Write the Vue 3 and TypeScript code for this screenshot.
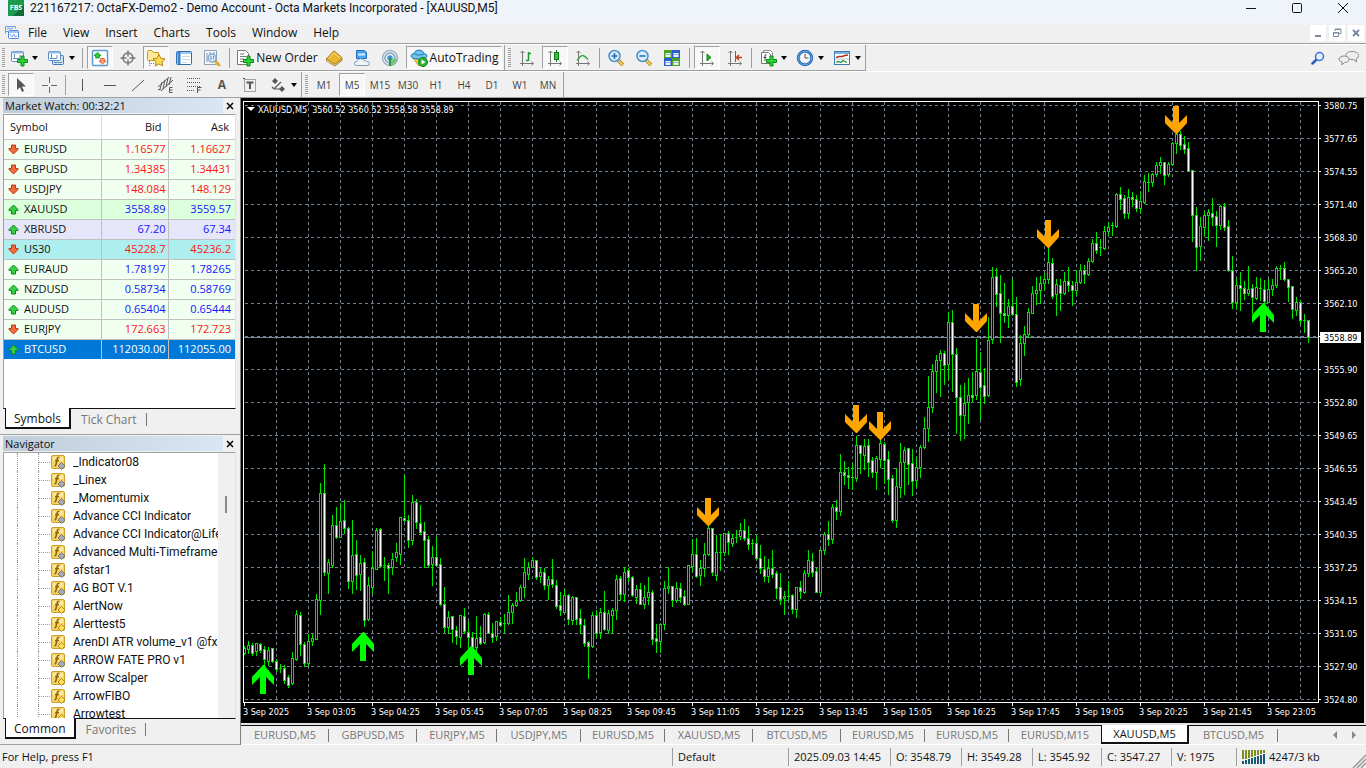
<script setup lang="ts">
import { ref } from 'vue'

interface Quote { symbol: string; bid: string; ask: string; up: boolean; tone: string }

const quotes: Quote[] = [
  { symbol: 'EURUSD', bid: '1.16577', ask: '1.16627', up: false, tone: 'mint' },
  { symbol: 'GBPUSD', bid: '1.34385', ask: '1.34431', up: false, tone: 'mint' },
  { symbol: 'USDJPY', bid: '148.084', ask: '148.129', up: false, tone: 'mint' },
  { symbol: 'XAUUSD', bid: '3558.89', ask: '3559.57', up: true, tone: 'green' },
  { symbol: 'XBRUSD', bid: '67.20', ask: '67.34', up: true, tone: 'lavender' },
  { symbol: 'US30', bid: '45228.7', ask: '45236.2', up: false, tone: 'cyan' },
  { symbol: 'EURAUD', bid: '1.78197', ask: '1.78265', up: true, tone: 'mint' },
  { symbol: 'NZDUSD', bid: '0.58734', ask: '0.58769', up: true, tone: 'mint' },
  { symbol: 'AUDUSD', bid: '0.65404', ask: '0.65444', up: true, tone: 'mint' },
  { symbol: 'EURJPY', bid: '172.663', ask: '172.723', up: false, tone: 'mint' },
  { symbol: 'BTCUSD', bid: '112030.00', ask: '112055.00', up: true, tone: 'selected' },
]

const indicators: { name: string; gold?: boolean }[] = [
  { name: '_Indicator08' }, { name: '_Linex' }, { name: '_Momentumix' },
  { name: 'Advance CCI Indicator' }, { name: 'Advance CCI Indicator@Life' },
  { name: 'Advanced Multi-Timeframe' }, { name: 'afstar1' }, { name: 'AG BOT V.1' },
  { name: 'AlertNow', gold: true }, { name: 'Alerttest5', gold: true },
  { name: 'ArenDI ATR volume_v1 @fx', gold: true }, { name: 'ARROW FATE PRO v1' },
  { name: 'Arrow Scalper', gold: true }, { name: 'ArrowFIBO', gold: true },
  { name: 'Arrowtest', gold: true },
]

const menus = ['File', 'View', 'Insert', 'Charts', 'Tools', 'Window', 'Help']
const periods = ['M1', 'M5', 'M15', 'M30', 'H1', 'H4', 'D1', 'W1', 'MN']
const period = ref('M5')

const chartTabs = [
  { name: 'EURUSD,M5', width: 88 }, { name: 'GBPUSD,M5', width: 88 },
  { name: 'EURJPY,M5', width: 80 }, { name: 'USDJPY,M5', width: 84 },
  { name: 'EURUSD,M5', width: 84 }, { name: 'XAUUSD,M5', width: 88 },
  { name: 'BTCUSD,M5', width: 88 }, { name: 'EURUSD,M5', width: 84 },
  { name: 'EURUSD,M5', width: 84 }, { name: 'EURUSD,M15', width: 92 },
  { name: 'XAUUSD,M5', width: 88 }, { name: 'BTCUSD,M5', width: 89 },
]
const activeTab = ref(10)

const status = [
  { text: 'Default', width: 116 }, { text: '2025.09.03 14:45', width: 102 },
  { text: 'O: 3548.79', width: 71 }, { text: 'H: 3549.28', width: 71 },
  { text: 'L: 3545.92', width: 69 }, { text: 'C: 3547.27', width: 70 },
  { text: 'V: 1975', width: 65 },
]

const heading = 'XAUUSD,M5\u00a0 3560.52 3560.52 3558.58 3558.89'

const prices = [
  '3580.75', '3577.65', '3574.55', '3571.40', '3568.30', '3565.20', '3562.10', '3558.95',
  '3555.90', '3552.80', '3549.65', '3546.55', '3543.45', '3540.35', '3537.25', '3534.15',
  '3531.05', '3527.90', '3524.80',
].map((text, i) => ({ text, y: 105 + 33 * i }))
const priceLabels = prices.filter(p => p.text !== '3558.95')

const times = [
  '2025', '03:05', '04:25', '05:45', '07:05', '08:25', '09:45', '11:05', '12:25', '13:45',
  '15:05', '16:25', '17:45', '19:05', '20:25', '21:45', '23:05',
].map((text, i) => ({ text: `3 Sep ${text}`, x: 244 + 64 * i }))

const gridX = Array.from({ length: 33 }, (_, i) => 276 + 32 * i)

// One candle each: high, body top, body bottom, low, direction
const bars = `
646 648 653 654 u|641 645 649 653 u|643 645 653 655 d|643 643 651 655 u|643 644 650 652 d|646 649 659 667 d
647 650 661 665 u|648 648 661 662 d|659 661 669 671 d|664 668 668 672 d|665 668 680 683 d|675 677 685 687 d
652 658 683 684 u|610 614 659 660 u|612 615 644 655 d|642 644 663 666 d|634 641 663 665 u|634 638 641 645 u
594 599 639 639 u|483 493 600 614 u|464 493 572 575 d|559 562 573 593 u|515 525 565 567 u|507 525 537 538 d
503 521 537 537 u|500 520 528 533 d|527 528 581 588 d|520 555 581 593 u|540 554 575 589 d|555 563 574 590 u
558 562 620 626 d|577 585 619 620 u|551 568 587 593 u|528 530 569 569 u|528 529 566 567 d|557 565 565 580 d
563 565 568 593 d|553 559 567 574 u|543 552 557 561 u|517 517 554 564 u|475 518 520 521 d|515 520 540 547 d
495 502 540 544 u|499 502 522 528 d|505 523 532 534 d|522 531 540 567 d|536 539 565 567 d|546 557 564 585 u
537 557 565 565 d|558 564 604 605 d|587 604 627 632 d|611 617 627 633 u|616 616 629 642 d|626 630 636 644 d
615 615 637 647 u|608 616 631 633 d|621 632 637 651 d|632 637 647 649 d|616 638 647 651 u|626 637 643 644 d
613 614 642 643 u|612 614 633 633 d|623 633 637 642 d|621 621 636 640 u|617 622 625 626 d|614 623 623 632 d
595 612 623 624 u|603 605 612 623 u|592 601 605 606 u|585 587 600 601 u|558 572 587 597 u|562 567 574 579 u
557 560 567 567 u|560 560 577 579 d|568 572 576 582 u|568 572 585 589 d|576 579 585 599 u|559 579 584 587 d
580 585 606 608 d|592 605 610 615 d|589 595 612 612 u|594 595 619 624 d|596 597 620 624 u|597 597 619 624 d
609 618 624 633 d|619 625 643 646 d|641 642 646 678 d|612 615 646 647 u|610 615 633 637 d|608 612 632 638 u
591 612 629 630 d|610 613 630 633 u|608 610 615 632 u|575 579 610 619 u|576 578 594 600 d|567 572 594 601 u
568 570 577 581 d|576 577 595 596 d|585 589 597 603 u|583 589 604 604 d|585 597 604 608 u|577 592 597 604 u
590 592 639 644 d|624 638 641 652 d|623 624 641 652 u|581 588 624 629 u|567 586 588 593 u|586 586 600 606 d
582 588 600 602 u|583 588 597 602 d|590 596 604 605 d|565 565 604 604 u|539 554 566 571 u|538 554 576 577 d
560 568 575 585 u|543 554 568 576 u|526 528 554 555 u|528 528 572 575 d|535 552 575 580 u|534 552 552 570 d
533 533 552 555 u|531 533 542 554 d|534 538 543 546 u|530 537 537 542 d|523 530 536 539 u|519 530 538 540 d
526 538 544 549 d|539 543 543 554 d|535 543 558 559 d|545 558 568 573 d|556 569 576 581 d|559 568 576 582 u
550 568 574 577 d|571 573 588 598 d|573 587 599 604 d|591 596 598 614 u|581 596 596 600 d|594 595 609 613 d
587 587 609 617 u|581 587 591 598 d|570 573 592 593 u|550 560 573 576 u|553 561 572 576 d|568 571 592 592 d
549 550 592 594 u|532 534 550 554 u|521 534 539 545 d|504 507 539 543 u|500 507 511 519 d|454 472 511 515 u
461 472 475 484 d|467 475 477 488 d|463 477 477 489 d|436 445 478 481 u|445 445 453 473 d|439 446 455 469 u
439 445 462 476 d|457 460 472 477 d|456 458 472 489 u|440 443 459 467 u|442 444 460 483 d|451 459 479 494 d
475 478 520 522 d|468 486 520 527 u|443 462 487 497 u|447 450 462 494 u|448 448 464 484 d|449 463 481 495 d
457 467 480 487 u|445 447 467 477 u|417 428 447 448 u|376 407 428 441 u|364 371 407 412 u|355 360 371 392 u
350 353 360 396 u|351 353 365 384 d|312 322 364 379 u|310 322 354 391 d|348 354 397 433 d|385 397 415 440 d
383 403 415 438 u|378 395 402 423 u|372 395 397 401 d|339 371 395 399 u|352 372 387 419 d|368 385 396 403 d
317 340 395 396 u|267 277 339 343 u|268 276 294 306 d|275 293 313 342 d|283 313 315 322 d|299 306 315 327 u
279 306 314 315 d|297 314 382 386 d|335 343 379 385 u|326 334 343 355 u|308 312 334 337 u|286 293 313 313 u
277 290 293 304 u|276 283 290 303 u|273 279 283 290 u|248 262 279 283 u|258 263 296 298 d|279 284 294 315 u
279 285 293 310 d|272 281 293 294 u|267 281 285 291 d|281 285 290 305 d|270 282 290 295 u|264 270 282 283 u
265 270 274 283 d|258 261 274 275 u|239 243 261 262 u|232 243 250 253 d|239 247 247 255 d|226 231 248 249 u
222 227 231 235 u|222 225 225 235 d|193 194 226 227 u|187 194 199 209 d|195 198 213 218 d|189 197 213 218 u
192 197 199 206 d|195 199 208 211 d|191 201 208 213 u|175 181 202 203 u|173 182 182 191 d|173 174 182 186 u
162 165 174 176 u|157 162 165 173 u|162 162 175 184 d|162 164 174 176 u|142 143 164 165 u|134 134 143 153 u
131 134 145 149 d|136 144 149 153 d|142 148 171 171 d|170 170 215 241 d|207 215 247 270 d|217 226 246 260 u
211 215 227 235 u|209 212 215 240 u|198 213 217 225 d|211 216 225 246 d|205 206 225 229 u|203 206 227 230 d
220 226 270 271 d|256 270 302 308 d|278 285 302 309 u|272 285 288 310 d|281 288 293 299 d|266 289 293 295 u
284 288 297 313 d|277 287 298 299 u|278 288 288 300 d|280 289 301 304 d|279 289 302 302 u|279 285 289 295 u
266 268 285 287 u|265 268 268 279 d|262 268 279 280 d|279 279 287 301 d|286 286 309 318 d|297 302 310 315 u
300 302 320 323 d|314 320 320 332 d|320 320 337 342 d`
  .trim()
  .split(/[|\n]/)
  .map((row, i) => {
    const [high, top, bottom, low, dir] = row.split(' ')
    return { x: 244 + 4 * i, high: +high, top: +top, bottom: +bottom, low: +low, down: dir === 'd' }
  })

const box = (x: number, y: number, w: number, h: number) => `M${x} ${y}h${w}v${h}h${-w}z`
const wicks = bars.map(b => box(b.x, b.high, 1, b.low - b.high + 1)).join('')
const bodies = bars.map(b => box(b.x - 1, b.top, 3, b.bottom - b.top + 1)).join('')
const inner = (down: boolean) => bars
  .filter(b => b.down === down && b.bottom - b.top > 1)
  .map(b => box(b.x, b.top + 1, 1, b.bottom - b.top - 1)).join('')
const fallingFill = inner(true)
const risingFill = inner(false)

const sells = [[708, 498], [856, 405], [880, 412], [976, 304], [1048, 220], [1176, 106]]
const buys = [[263, 665], [363, 632], [471, 646], [1263, 303]]
</script>

<template>
  <div class="terminal">
    <header class="titlebar">
      <svg class="brand" width="16" height="16" viewBox="0 0 16 16" aria-hidden="true">
        <rect width="16" height="16" fill="#1d9a4c" />
        <path d="M16 5v11H5z" fill="#0f6b38" />
        <text x="8" y="10" text-anchor="middle" font-size="7" font-weight="700" fill="#fff">FBS</text>
      </svg>
      <h1>221167217: OctaFX-Demo2 - Demo Account - Octa Markets Incorporated - [XAUUSD,M5]</h1>
      <div class="window-buttons">
        <button type="button" aria-label="Minimize"><svg width="12" height="12" viewBox="0 0 12 12"><path d="M1 6.500h10" stroke="#111" /></svg></button>
        <button type="button" aria-label="Maximize"><svg width="12" height="12" viewBox="0 0 12 12"><rect x="1.500" y="1.500" width="9" height="9" rx="1" fill="none" stroke="#111" /></svg></button>
        <button type="button" aria-label="Close"><svg width="12" height="12" viewBox="0 0 12 12"><path d="M1 1l10 10M11 1L1 11" stroke="#111" /></svg></button>
      </div>
    </header>

    <nav class="menubar">
      <svg class="doc" width="16" height="16" viewBox="0 0 16 16" fill="none" aria-hidden="true">
        <path d="M1.500 8.500v-7h10v2M4 6.500H1.500M3 4l2-1 2 1 2-1" stroke="#6c9be8" />
        <rect x="4.500" y="5.500" width="10" height="8" rx="1" fill="#fff" stroke="#4f86e0" />
        <path d="M5 7h9" stroke="#4f86e0" /><path d="M6 9l2 3 2-3 1 3 2-1" stroke="#7aa7ef" />
      </svg>
      <button v-for="m in menus" :key="m" type="button">{{ m }}</button>
      <div class="mdi">
        <button type="button" aria-label="Minimize chart"><svg width="10" height="10" viewBox="0 0 10 10"><path d="M2 8h6" stroke="#7b8b9b" stroke-width="2" /></svg></button>
        <button type="button" aria-label="Restore chart"><svg width="10" height="10" viewBox="0 0 10 10" fill="none" stroke="#7b8b9b"><path d="M3 3V1.500h6v4H7M3 1h6" /><path d="M1.500 4.500h5v4h-5zM1 5h6" /></svg></button>
        <button type="button" aria-label="Close chart"><svg width="10" height="10" viewBox="0 0 10 10"><path d="M2 2l6 6M8 2L2 8" stroke="#7b8b9b" stroke-width="2" /></svg></button>
      </div>
    </nav>

    <div class="toolrow">
      <div class="toolbar">
        <span class="grip"></span>
        <button type="button" class="drop" aria-label="New chart">
          <svg width="18" height="18" viewBox="0 0 18 18"><rect x="1.500" y="2.500" width="12" height="10" rx="1" fill="#fdfefe" stroke="#5c8fc4" /><path d="M2 3.500h11" stroke="#8fb9e2" stroke-width="2" /><path d="M4.500 5v5M3 9.500h7M10 6v3" stroke="#5e8db8" /><path d="M11 7h3v3.500h3.500v3H14V17h-3v-3.500H7.500v-3H11z" fill="#2bd336" stroke="#0b8a14" /></svg><i></i>
        </button>
        <button type="button" class="drop" aria-label="Profiles">
          <svg width="18" height="18" viewBox="0 0 18 18"><rect x="5.500" y="6.500" width="11" height="9" rx="1" fill="#cfe3f6" stroke="#3d78b8" /><rect x="1.500" y="2.500" width="12" height="9" rx="1" fill="#fdfefe" stroke="#5c8fc4" /><path d="M2 3.500h11" stroke="#8fb9e2" stroke-width="2" /><path d="M4.500 5v5M3 9.500h7M10 6v3M7 13.500h8" stroke="#5e8db8" /></svg><i></i>
        </button>
        <span class="sep"></span>
        <button type="button" class="tool pressed" aria-label="Market Watch">
          <svg width="18" height="18" viewBox="0 0 18 18"><rect x="1.500" y="1.500" width="15" height="15" rx="1" fill="#fff" stroke="#5a9ad8" stroke-width="1.500" /><path d="M6.500 3.500l3.500 3H8.300v2.500H4.700V6.500H3z" fill="#2bd336" stroke="#0b8a14" stroke-width=".8" /><path d="M11.500 15L8 12h1.700V9.500h3.600V12H15z" fill="#ffa27c" stroke="#d94c12" stroke-width=".8" /></svg>
        </button>
        <button type="button" class="tool" aria-label="Data Window">
          <svg width="18" height="18" viewBox="0 0 18 18" fill="none" stroke="#777" stroke-width="1.500"><circle cx="9" cy="9" r="5" /><path d="M9 1.500v6M9 10.500v6M1.500 9h6M10.500 9h6" /></svg>
        </button>
        <button type="button" class="tool pressed" aria-label="Navigator">
          <svg width="20" height="18" viewBox="0 0 20 18"><path d="M1.500 2.500q0-1 1-1h3.500l1.500 2h5v8H2.500q-1 0-1-1z" fill="#ffe793" stroke="#c79a2c" /><path d="M3.500 12v5M5 14.500h3" stroke="#777" stroke-dasharray="1 1" /><path d="M13 5.500l1.900 3.800 4.100.6-3 2.900.7 4.100-3.700-2-3.700 2 .7-4.100-3-2.900 4.100-.6z" fill="#ffdc4e" stroke="#b5881e" /></svg>
        </button>
        <button type="button" class="tool" aria-label="Terminal">
          <svg width="18" height="18" viewBox="0 0 18 18"><rect x="1.500" y="2.500" width="15" height="13" rx="1" fill="#fff" stroke="#2f6cab" /><path d="M2 4h14" stroke="#9ec7ee" stroke-width="2" /><path d="M4 3v12" stroke="#3a82cc" stroke-width="3" /><path d="M7 7.500h8M7 10.500h8M7 13.500h5" stroke="#c5d8ea" /></svg>
        </button>
        <button type="button" class="tool" aria-label="Strategy Tester">
          <svg width="18" height="18" viewBox="0 0 18 18"><path d="M1.500 1.500h12v14h-12z" fill="#f7f7f7" stroke="#8fa2b5" /><path d="M4 4v9M7 3v7M11 3v5" stroke="#7d98b3" /><path d="M12 12l4 4" stroke="#e2a92c" stroke-width="3" stroke-linecap="round" /><circle cx="9" cy="9" r="4" fill="#d5eafb" fill-opacity=".8" stroke="#7faad2" stroke-width="1.500" /><path d="M8 7v4M10.500 7v3" stroke="#6d93b8" /></svg>
        </button>
        <span class="sep wide"></span>
        <button type="button" class="labelled order">
          <svg width="18" height="18" viewBox="0 0 18 18"><path d="M1.500 1.500h8l3 3v11h-11z" fill="#fff" stroke="#777" /><path d="M4 5h4M4 7.500h6M4 10h4M4 12.500h3" stroke="#777" /><path d="M11 7h3v3.500h3.500v3H14V17h-3v-3.500H7.500v-3H11z" fill="#2bd336" stroke="#0b8a14" /></svg>
          New Order
        </button>
        <button type="button" class="tool" aria-label="MetaEditor">
          <svg width="18" height="18" viewBox="0 0 18 18"><path d="M1.500 9.500L10 15l7-5v1.500L10 17l-8.500-5z" fill="#f6edc8" stroke="#9c6c10" stroke-width=".8" /><path d="M1.500 10L8 2.500q.8-.7 1.600-.2L17 8.500q.5.700-.1 1.300L10.500 15q-.6.400-1.200 0z" fill="#e9b42f" stroke="#9c6c10" stroke-width=".8" /><path d="M3.500 10L8.500 4l7 5" fill="none" stroke="#f9d980" /></svg>
        </button>
        <button type="button" class="tool" aria-label="MQL5 storage">
          <svg width="18" height="18" viewBox="0 0 18 18"><path d="M3.500 1.500h8l2 2v6h-10z" fill="#4ba5ee" stroke="#1f6fc0" /><path d="M5 5.500h7" stroke="#d6ecff" stroke-width="2" /><path d="M3.500 16.500q-2-.2-2-2.200t2.500-2q1-3 4-2.600 2.200.2 3 2 2-.4 2.800.8 2.700 0 2.700 2t-2 2z" fill="#eef4fa" stroke="#7f9cba" /></svg>
        </button>
        <button type="button" class="tool" aria-label="Signals">
          <svg width="18" height="18" viewBox="0 0 18 18" fill="none"><circle cx="9" cy="9" r="7.500" stroke="#a3b5c2" stroke-width="1.500" /><circle cx="9" cy="9" r="5" stroke="#7ba6c8" stroke-width="1.500" /><circle cx="9" cy="9" r="2.700" fill="#3c96d2" /><path d="M9 9v8q6.500-.5 7.500-7" fill="#5bb562" fill-opacity=".6" /><path d="M9 9v8" stroke="#2c9a38" stroke-width="2" /></svg>
        </button>
        <button type="button" class="labelled auto pressed">
          <svg width="18" height="18" viewBox="0 0 18 18"><path d="M3 9l6 8 5-6z" fill="#f6d44c" stroke="#c39a1c" /><path d="M1 7q0-2 3-2.500Q5 1 9 1t5 3.500q3 .5 3 2.500 0 3-8 3T1 7z" fill="#6fc4ee" stroke="#2380b4" /><path d="M4 5q5 2.500 10 0" fill="none" stroke="#2380b4" /><circle cx="13" cy="13" r="4.500" fill="#27b634" stroke="#12831c" /><path d="M11.500 10.500v5l4-2.500z" fill="#fff" /></svg>
          AutoTrading
        </button>
        <span class="edge"></span>
        <span class="grip"></span>
        <button type="button" class="tool" aria-label="Bar chart">
          <svg width="18" height="18" viewBox="0 0 18 18" fill="none"><path d="M4.500 2v13M2 14.500h13M2.500 4l2-2 2 2M13.500 12.500l2 2-2 2M4.500 14v3" stroke="#777" /><path d="M10.500 3v9M8 11.500h2M11 4.500h2" stroke="#1a9a28" stroke-width="1.500" /></svg>
        </button>
        <button type="button" class="tool pressed" aria-label="Candlesticks">
          <svg width="18" height="18" viewBox="0 0 18 18" fill="none"><path d="M4.500 2v13M2 14.500h13M2.500 4l2-2 2 2M13.500 12.500l2 2-2 2M4.500 14v3" stroke="#777" /><path d="M10.500 1v12" stroke="#0b7a16" /><rect x="8.500" y="3.500" width="4" height="7" fill="#2bc63a" stroke="#0b7a16" /></svg>
        </button>
        <button type="button" class="tool" aria-label="Line chart">
          <svg width="18" height="18" viewBox="0 0 18 18" fill="none"><path d="M4.500 2v13M2 14.500h13M2.500 4l2-2 2 2M13.500 12.500l2 2-2 2M4.500 14v3" stroke="#777" /><path d="M3 11.500Q7 6 9 6.500t5 4" stroke="#3fa84a" stroke-width="1.500" /></svg>
        </button>
        <span class="sep thin"></span>
        <button type="button" class="tool" aria-label="Zoom in">
          <svg width="18" height="18" viewBox="0 0 18 18"><path d="M11 11l5 5" stroke="#a77a14" stroke-width="3.500" /><path d="M11.500 11.500l4.500 4.500" stroke="#f3cf58" stroke-width="2" /><circle cx="7.500" cy="7" r="5.500" fill="#d8ecfb" stroke="#4d8fca" stroke-width="1.500" /><path d="M4.500 7h6M7.500 4v6" stroke="#256bb0" stroke-width="1.500" /></svg>
        </button>
        <button type="button" class="tool" aria-label="Zoom out">
          <svg width="18" height="18" viewBox="0 0 18 18"><path d="M11 11l5 5" stroke="#a77a14" stroke-width="3.500" /><path d="M11.500 11.500l4.500 4.500" stroke="#f3cf58" stroke-width="2" /><circle cx="7.500" cy="7" r="5.500" fill="#d8ecfb" stroke="#4d8fca" stroke-width="1.500" /><path d="M4.500 7h6" stroke="#256bb0" stroke-width="1.500" /></svg>
        </button>
        <button type="button" class="tool" aria-label="Tile windows">
          <svg width="18" height="18" viewBox="0 0 18 18"><path d="M1 1h8v8H1zM9 9h8v8H9z" fill="#4aa51c" /><path d="M9 1h8v8H9zM1 9h8v8H1z" fill="#2a5cd2" /><path d="M2.500 4h5v4h-5zM10.500 4h5v4h-5zM2.500 12h5v4h-5zM10.500 12h5v4h-5z" fill="#eef5ff" /><path d="M3 5.500h4M11 5.500h4M3 13.500h4M11 13.500h4" stroke="#9db7d8" /></svg>
        </button>
        <span class="sep"></span>
        <button type="button" class="tool pressed" aria-label="Auto scroll">
          <svg width="18" height="18" viewBox="0 0 18 18" fill="none"><path d="M4.500 2v13M2 14.500h13M2.500 4l2-2 2 2M13.500 12.500l2 2-2 2M4.500 14v3" stroke="#777" /><path d="M9 5v7l4-3.500z" fill="#1fae2d" stroke="#0e8a1b" /></svg>
        </button>
        <button type="button" class="tool" aria-label="Chart shift">
          <svg width="18" height="18" viewBox="0 0 18 18" fill="none"><path d="M4.500 2v13M2 14.500h13M2.500 4l2-2 2 2M13.500 12.500l2 2-2 2M4.500 14v3" stroke="#777" /><path d="M9.500 2v11" stroke="#2b73b4" /><path d="M16 8.500h-5M13 6l-2.500 2.500L13 11" stroke="#c04012" stroke-width="1.500" /></svg>
        </button>
        <span class="sep thin"></span>
        <button type="button" class="drop" aria-label="Indicators">
          <svg width="18" height="18" viewBox="0 0 18 18"><path d="M4.500 1.500h7l2 2v9h-9z" fill="#fff" stroke="#888" /><path d="M2.500 3.500h7l2 2v9h-9z" fill="#fff" stroke="#777" /><path d="M7.500 6Q6 5 6 7v5M4.500 8.500h3" fill="none" stroke="#444" /><path d="M11 7h3v3.500h3.500v3H14V17h-3v-3.500H7.500v-3H11z" fill="#2bd336" stroke="#0b8a14" /></svg><i></i>
        </button>
        <button type="button" class="drop" aria-label="Periods">
          <svg width="18" height="18" viewBox="0 0 18 18"><circle cx="9" cy="9" r="6.800" fill="#f3f8fd" stroke="#1f66b6" stroke-width="2.800" /><circle cx="9" cy="9" r="6.800" fill="none" stroke="#69abea" /><path d="M9 5v4h3.500" fill="none" stroke="#555" /><path d="M9 3.500v1M9 13.500v1M3.500 9h1M13.500 9h1" stroke="#888" /></svg><i></i>
        </button>
        <button type="button" class="drop" aria-label="Templates">
          <svg width="18" height="18" viewBox="0 0 18 18"><rect x="1.500" y="2.500" width="15" height="13" fill="#fff" stroke="#3a78b8" /><path d="M2 4h14" stroke="#7db2e6" stroke-width="2" /><path d="M3 8.500l3-1h3l3-1 3-.5" fill="none" stroke="#a8331a" stroke-width="1.500" /><path d="M2 10h14" stroke="#aac6e0" /><path d="M3 13.500l2-1 3 1 2-2 2 1 2 1" fill="none" stroke="#27923a" stroke-width="1.200" /></svg><i></i>
        </button>
      </div>
      <div class="corner">
        <button type="button" aria-label="Search"><svg width="14" height="14" viewBox="0 0 14 14"><path d="M5.500 8.500L1.500 12.500" stroke="#2c5fc4" stroke-width="2.500" stroke-linecap="round" /><circle cx="8.500" cy="5.500" r="4" fill="#e6effc" stroke="#3c70d6" stroke-width="1.500" /></svg></button>
        <button type="button" aria-label="Messages"><svg width="22" height="16" viewBox="0 0 22 16" fill="#eee" stroke="#888"><path d="M14 1.500c4 0 6.500 1.500 6.500 4 0 2-1 3-2.500 3.500l.5 3-3-2.500H14c-4 0-6-1.500-6-4s2-4 6-4z" /><path d="M6 6c3 0 5 1.300 5 3.300s-2 3.200-4.500 3.200L4 15v-3c-1.700-.5-3-1.300-3-2.700C1 7.300 3 6 6 6z" /></svg></button>
      </div>
    </div>

    <div class="toolrow second">
      <div class="toolbar">
        <span class="grip"></span>
        <button type="button" class="tool pressed" aria-label="Cursor"><svg width="18" height="18" viewBox="0 0 18 18"><path d="M5 2v12l3-2.700 2 4.700 2-1-2-4.500h4z" fill="#555" /></svg></button>
        <button type="button" class="tool" aria-label="Crosshair"><svg width="18" height="18" viewBox="0 0 18 18"><path d="M9.500 1v6M9.500 11v6M2 9.500h6M11 9.500h6" stroke="#666" /></svg></button>
        <span class="sep thin"></span>
        <button type="button" class="tool" aria-label="Vertical line"><svg width="18" height="18" viewBox="0 0 18 18"><path d="M9.500 3v12" stroke="#555" /></svg></button>
        <button type="button" class="tool" aria-label="Horizontal line"><svg width="18" height="18" viewBox="0 0 18 18"><path d="M3 9.500h12" stroke="#555" /></svg></button>
        <button type="button" class="tool" aria-label="Trendline"><svg width="18" height="18" viewBox="0 0 18 18"><path d="M3 15L15 4" stroke="#555" /></svg></button>
        <button type="button" class="tool" aria-label="Equidistant channel"><svg width="18" height="18" viewBox="0 0 18 18" stroke="#555" fill="none"><path d="M1 11L12 1M4 15L16 4M3 13l2-7M6 13l2-9M9 11l2-9M12 9l2-8M1 14l3-1" /><path d="M15.500 11.500h-3v5h3M12.500 14h3" /></svg></button>
        <button type="button" class="tool" aria-label="Fibonacci"><svg width="18" height="18" viewBox="0 0 18 18" stroke="#555" fill="none"><path d="M2 2.500h14M2 6.500h14M2 10.500h14M2 14.500h8" stroke-dasharray="1 1" /><path d="M12.500 17v-5.500h4M12.500 14h3" /></svg></button>
        <button type="button" class="tool glyph" aria-label="Text">A</button>
        <button type="button" class="tool" aria-label="Text label"><svg width="18" height="18" viewBox="0 0 18 18" stroke="#555" fill="none"><rect x="3.500" y="3.500" width="11" height="12" stroke-dasharray="1 1" /><path d="M5.500 6.500h7M9 6v7" stroke-width="2" /><path d="M2 2.500h2" /></svg></button>
        <button type="button" class="drop" aria-label="Arrows"><svg width="18" height="18" viewBox="0 0 18 18"><path d="M6 2l3 3-3 3-3-3zM13 10l3 3-3 3-3-3z" fill="#555" /><path d="M3 11l2 2 7-7M6 13h6" fill="none" stroke="#555" stroke-width="1.200" /></svg><i></i></button>
        <span class="edge"></span>
        <span class="grip"></span>
        <button v-for="p in periods" :key="p" type="button" class="tool period" :class="{ pressed: p === period }" @click="period = p">{{ p }}</button>
      </div>
    </div>

    <main class="workspace">
      <aside class="docks">
        <section class="dock watch">
          <div class="dock-title"><h2>Market Watch: 00:32:21</h2><button type="button" aria-label="Close Market Watch"><svg width="8" height="8" viewBox="0 0 8 8"><path d="M1 1l6 6M7 1L1 7" stroke="#000" stroke-width="1.500" /></svg></button></div>
          <div class="sheet">
            <table>
              <thead><tr><th scope="col">Symbol</th><th scope="col">Bid</th><th scope="col">Ask</th></tr></thead>
              <tbody>
                <tr v-for="q in quotes" :key="q.symbol" :class="[q.tone, q.up ? 'up' : 'down']">
                  <td>
                    <svg width="11" height="11" viewBox="0 0 11 11" aria-hidden="true">
                      <path v-if="q.up" d="M5.500 1L10 5.500v1H7.500V10h-4V6.500H1v-1z" fill="#35cf45" stroke="#13831e" />
                      <path v-else d="M5.500 10L10 5.500v-1H7.500V1h-4v3.500H1v1z" fill="#f46a3c" stroke="#b83a12" />
                    </svg>{{ q.symbol }}
                  </td>
                  <td>{{ q.bid }}</td>
                  <td>{{ q.ask }}</td>
                </tr>
              </tbody>
            </table>
          </div>
          <div class="tabs"><button type="button" class="on">Symbols</button><button type="button">Tick Chart</button></div>
        </section>

        <section class="dock navigator">
          <div class="dock-title"><h2>Navigator</h2><button type="button" aria-label="Close Navigator"><svg width="8" height="8" viewBox="0 0 8 8"><path d="M1 1l6 6M7 1L1 7" stroke="#000" stroke-width="1.500" /></svg></button></div>
          <div class="sheet tree">
            <ul>
              <li v-for="n in indicators" :key="n.name">
                <span class="rail first"></span><span class="rail"></span><span class="branch"></span>
                <svg width="16" height="16" viewBox="0 0 16 16" aria-hidden="true">
                  <rect x="1.500" y="1.500" width="13" height="13" rx="1.500" fill="#f6d562" stroke="#c9a02f" />
                  <path d="M3 3h10v4H3z" fill="#fbe89a" />
                  <path d="M9.500 3.500q-2-.5-2.300 1.500L6 10.500q-.3 1.500-1.500 1.300M5 6.500h4" fill="none" stroke="#8a6412" stroke-width="1.500" />
                  <path d="M11.500 8.500l3.500 3.500-3.500 3.500L8 12z" :fill="n.gold ? '#ffdf55' : '#aaa'" :stroke="n.gold ? '#b58a1b' : '#777'" />
                </svg>
                <span class="name">{{ n.name }}</span>
              </li>
            </ul>
            <div class="scroll"><span></span></div>
          </div>
          <div class="tabs"><button type="button" class="on">Common</button><button type="button">Favorites</button></div>
        </section>
      </aside>

      <section class="charts">
        <div class="chart">
          <svg role="img" aria-label="XAUUSD,M5">
            <g transform="translate(-241 -99)">
              <g stroke="#708090" stroke-dasharray="3 3" shape-rendering="crispEdges">
                <path v-for="x in gridX" :key="'x' + x" :d="`M${x}.5 102V702`" />
                <path v-for="p in prices" :key="'y' + p.y" :d="`M245 ${p.y}.5H1318`" />
              </g>
              <path d="M244 337.500H1318" stroke="#778899" shape-rendering="crispEdges" />
              <g shape-rendering="crispEdges">
                <path :d="wicks" fill="#00e600" /><path :d="bodies" fill="#00e600" />
                <path :d="risingFill" fill="#000" /><path :d="fallingFill" fill="#fff" />
                <path d="M243.500 702.500V101.500H1318.500V702.500z" fill="none" stroke="#fff" />
                <path v-for="t in times" :key="'k' + t.x" :d="`M${t.x}.5 703v3`" stroke="#fff" />
                <path v-for="p in prices" :key="'p' + p.y" :d="`M1319 ${p.y}.5h2`" stroke="#fff" />
              </g>
              <path v-for="s in sells" :key="'s' + s[0]" :transform="`translate(${s[0]} ${s[1]})`" d="M-3 0H3V17L11 9V17L1 28H0L-11 17V9L-3 17z" fill="#ffa500" />
              <path v-for="b in buys" :key="'b' + b[0]" :transform="`translate(${b[0]} ${b[1]})`" d="M-3 29H3V12L11 20V12L1 0H0L-11 12V20L-3 12z" fill="#0f0" />
              <path d="M247 107h8l-4 4z" fill="#fff" />
              <g class="labels">
                <text x="258" y="113">{{ heading }}</text>
                <text v-for="t in times" :key="t.x" :x="t.x - 1" y="715">{{ t.text }}</text>
                <text v-for="p in priceLabels" :key="p.y" x="1324" :y="p.y + 4">{{ p.text }}</text>
                <rect x="1320" y="332" width="41" height="11" fill="#fff" />
                <text class="last" x="1324" y="341">3558.89</text>
              </g>
            </g>
          </svg>
        </div>
        <div class="chart-tabs">
          <button v-for="(t, i) in chartTabs" :key="i" type="button" :class="{ on: i === activeTab, before: i === activeTab - 1 }" :style="{ width: t.width + 'px' }" @click="activeTab = i">{{ t.name }}</button>
          <div class="pager">
            <button type="button" aria-label="Scroll left"><svg width="6" height="8" viewBox="0 0 6 8"><path d="M5 0v8L1 4z" fill="#888" /></svg></button>
            <button type="button" aria-label="Scroll right"><svg width="6" height="8" viewBox="0 0 6 8"><path d="M1 0v8l4-4z" fill="#888" /></svg></button>
          </div>
        </div>
      </section>
    </main>

    <footer class="statusbar">
      <span class="hint">For Help, press F1</span>
      <span v-for="s in status" :key="s.text" class="cell" :style="{ width: s.width + 'px' }">{{ s.text }}</span>
      <span class="cell traffic">
        <svg width="24" height="14" viewBox="0 0 24 14" aria-hidden="true">
          <path d="M1 0v9M4 0v9M7 0v8M10 0v7M13 0v6M16 0v5M19 0v4M22 0v3" stroke="#7b8f1c" stroke-width="2" />
          <path d="M1 11v3M4 10v4M7 9v5M10 8v6M13 7v7M16 6v8M19 5v9M22 4v10" stroke="#1b5875" stroke-width="2" />
        </svg>4247/3 kb
      </span>
      <svg class="resize" width="14" height="14" viewBox="0 0 14 14" aria-hidden="true"><path d="M1 14L14 1M5 14l9-9M9 14l5-5" stroke="#999" stroke-width="1.500" /></svg>
    </footer>
  </div>
</template>

<style>
body { margin: 0; background: #f0f0f0; }
</style>

<style scoped>
.terminal {
  display: flex; flex-direction: column; height: 100vh; min-height: 600px; overflow: hidden;
  background: #f0f0f0; color: #111; font: 12px/16px "Open Sans", "Noto Sans", sans-serif;
}
* { box-sizing: border-box; }
svg { display: block; flex: none; }
h1, h2 { margin: 0; font: inherit; }
button { display: flex; align-items: center; justify-content: center; margin: 0; padding: 0; border: 0; background: none; color: inherit; font: inherit; }

.titlebar { display: flex; align-items: center; flex: none; height: 23px; padding: 0 0 8px 8px; background: #eff4fb; }
.titlebar h1 { flex: 1; margin-left: 6px; font-family: Roboto, "Open Sans", sans-serif; white-space: nowrap; }
.window-buttons { display: flex; }
.window-buttons button { width: 46px; height: 16px; }

.menubar { display: flex; align-items: center; flex: none; height: 21px; padding: 0 2px 0 4px; border-bottom: 1px solid #a0a0a0; }
.menubar > button { padding: 0 8px; }
.mdi { display: flex; gap: 3px; margin-left: auto; }
.mdi button { width: 16px; height: 16px; background: #fff; }

.toolrow { display: flex; align-items: center; justify-content: space-between; flex: none; height: 27px; border-top: 1px solid #fff; }
.toolrow.second { height: 26px; }
.toolbar { display: flex; align-items: center; height: 26px; border-right: 1px solid #a0a0a0; border-bottom: 1px solid #a0a0a0; }
.second .toolbar { height: 25px; padding-right: 1px; border-bottom: 0; }
.grip { width: 3px; height: 19px; margin: 0 0 0 2px; background: repeating-linear-gradient(#a0a0a0 0 1px, #f0f0f0 1px 2px); }
.second .grip { margin-right: 2px; }
.edge + .grip { margin: 0 2px 0 3px; }
.tool { width: 26px; height: 23px; margin: 0 1px; }
.pressed { border: 1px solid; border-color: #a0a0a0 #fff #fff #a0a0a0; background: #f8f8f8; }
.drop { width: 37px; height: 23px; gap: 4px; }
.drop i { border: 4px solid transparent; border-top-color: #000; border-bottom: 0; border-left-width: 3px; border-right-width: 3px; }
.sep { width: 1px; height: 20px; margin: 0 3px; background: #a0a0a0; }
.sep.wide { margin: 0 4px 0 3px; }
.sep.thin { margin: 0 2px; }
.edge { width: 1px; height: 25px; background: #a0a0a0; }
.labelled { height: 23px; white-space: nowrap; gap: 2px; }
.order { width: 86px; }
.auto { width: 96px; margin: 0 2px 0 2px; }
.glyph { color: #555; font-weight: 700; }
.period { color: #444; font-size: 10px; }
.corner { display: flex; gap: 13px; padding-right: 6px; }

.workspace { display: flex; flex: 1; min-height: 0; }
.docks { display: flex; flex-direction: column; flex: none; width: 240px; border-top: 1px solid #a0a0a0; }
.dock { display: flex; flex-direction: column; padding: 0 4px 4px 3px; }
.watch { height: 337px; border-bottom: 1px solid #a0a0a0; }
.navigator { flex: 1; min-height: 0; padding-top: 1px; border-bottom: 1px solid #a0a0a0; }
.dock-title { display: flex; flex: none; height: 15px; justify-content: space-between; margin-bottom: 1px; }
.dock-title h2 { flex: 1; padding-left: 2px; background: linear-gradient(90deg, #bfcddb, #d9e6f4); font-size: 11px; line-height: 15px; }
.dock-title button { width: 14px; margin-right: -1px; }
.sheet { flex: 1; min-height: 0; overflow: hidden; border: 1px solid #a0a0a0; border-right-color: #e3e3e3; border-bottom: 1px solid #111; background: #fff; font-size: 11px; }
table { width: 100%; table-layout: fixed; border-collapse: collapse; }
th { height: 24px; padding: 0 6px; border-right: 1px solid #ddd; border-bottom: 1px solid #c8c8c8; font-weight: 400; text-align: right; }
th:first-child { width: 97px; text-align: left; }
th:nth-child(2) { width: 67px; }
th:last-child { border-right: 0; }
td { height: 20px; padding: 0 2px; border-right: 1px solid #c0c0c0; border-bottom: 1px solid #c0c0c0; text-align: right; line-height: 18px; }
td:first-child { padding-left: 4px; color: #111; text-align: left; }
td:last-child { padding-right: 4px; border-right: 0; }
td svg { display: inline-block; margin-right: 5px; vertical-align: -2px; }
.mint { background: #f0fff0; }
.green { background: #dcffdc; }
.lavender { background: #e6e6fa; }
.cyan { background: #afeeee; }
.up { color: #1414ff; }
.down { color: #ff1414; }
.selected, .selected td:first-child { background: #0078d7; color: #fff; }
.selected td { border-bottom: 0; }
.tabs { display: flex; flex: none; height: 21px; padding-left: 2px; color: #777; }
.tabs button { position: relative; height: 20px; padding: 2px 10px 0; }
.tabs button::after { content: ""; position: absolute; right: 0; top: 4px; height: 13px; border-right: 1px solid #777; }
.tabs .on { margin-top: -1px; height: 21px; padding: 2px 8px 0; border: 1px solid #111; border-top: 0; background: #fff; color: #111; border-right-width: 2px; border-bottom-width: 2px; }
.tabs .on::after { content: none; }
.tree { display: flex; }
ul { flex: 1; min-width: 0; margin: 0; padding: 0; overflow: hidden; list-style: none; }
li { display: flex; align-items: center; height: 18px; }
.rail { flex: none; width: 21px; height: 18px; border-right: 1px dotted #999; }
.rail.first { width: 14px; }
.branch { flex: none; width: 11px; border-top: 1px dotted #999; }
li svg { margin: 0 7px 0 0; }
.name { flex: 1; min-width: 0; overflow: hidden; font: 12px/16px Roboto, "Open Sans", sans-serif; white-space: nowrap; }
.scroll { flex: none; width: 17px; padding: 43px 0 0 7px; background: #f0f0f0; }
.scroll span { display: block; width: 2px; height: 17px; background: #888; }

.charts { display: flex; flex-direction: column; flex: 1; min-width: 0; border-top: 1px solid #a0a0a0; border-left: 1px solid #808080; }
.chart { flex: 1; min-height: 0; padding-top: 1px; border-right: 2px solid #e3e3e3; border-bottom: 2px solid #e3e3e3; background: #000; }
.chart svg { width: 100%; height: 100%; }
.labels { fill: #fff; font: 9px "DejaVu Sans Condensed", "Open Sans", sans-serif; }
.labels .last { fill: #000; }
.chart-tabs { display: flex; flex: none; height: 20px; border-top: 1px solid #111; border-bottom: 1px solid #fff; color: #777; font-size: 11px; }
.chart-tabs > button { position: relative; flex: none; height: 18px; }
.chart-tabs > button::after { content: ""; position: absolute; right: 0; top: 3px; height: 13px; border-right: 1px solid #777; }
.chart-tabs > .before::after, .chart-tabs > .on::after { content: none; }
.chart-tabs > .on { margin-top: -1px; height: 19px; border: 1px solid #111; border-top: 0; border-right-width: 2px; border-bottom-width: 2px; background: #fff; color: #111; }
.pager { display: flex; gap: 13px; margin-left: auto; padding-right: 9px; }

.statusbar { display: flex; align-items: center; flex: none; height: 23px; padding-left: 2px; font-size: 11px; }
.hint { flex: 1; white-space: nowrap; }
.cell { display: flex; align-items: center; flex: none; height: 18px; padding-left: 5px; border-left: 1px solid #a0a0a0; white-space: nowrap; }
.traffic { gap: 3px; width: 116px; }
.resize { align-self: flex-end; }
</style>
